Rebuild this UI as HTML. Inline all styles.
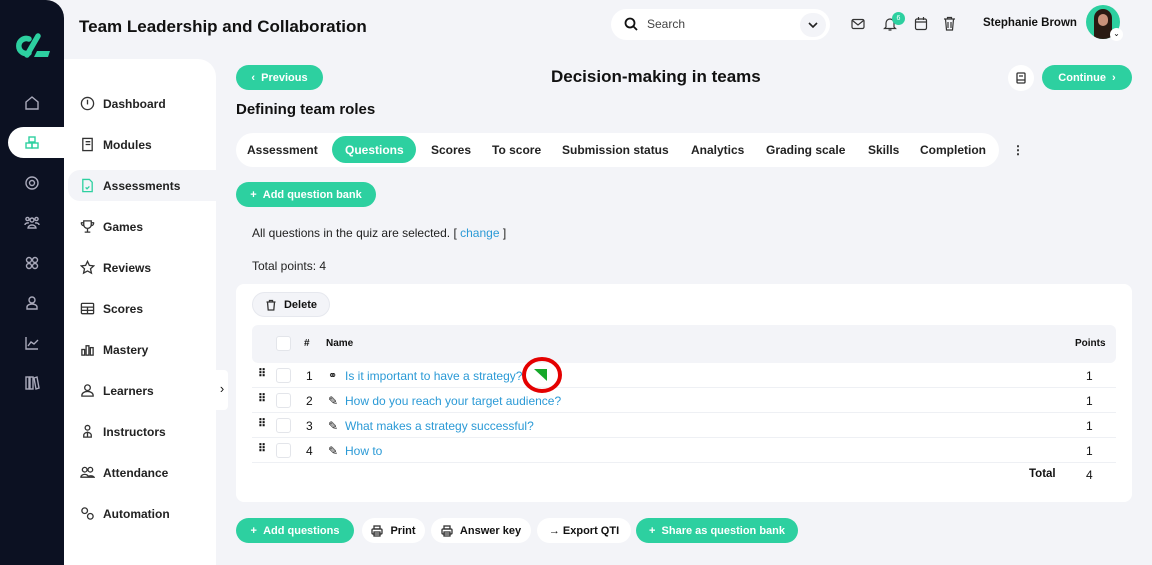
<!DOCTYPE html>
<html><head><meta charset="utf-8"><style>
*{box-sizing:border-box;margin:0;padding:0}
body{width:1152px;height:565px;overflow:hidden;background:#f3f4f8;font-family:"Liberation Sans",sans-serif;color:#111;position:relative}
.a{position:absolute}
.rail{left:0;top:0;width:64px;height:565px;background:#0c1122;border-top-right-radius:18px}
.nav{left:64px;top:59px;width:152px;height:506px;background:#fff;border-top-right-radius:18px}
.ni{position:absolute;left:16px;font-size:12px;font-weight:bold;color:#222;display:flex;align-items:center;gap:8px}
.ni svg{width:15px;height:15px;fill:none;stroke:#333;stroke-width:1.4}
.ri{position:absolute;left:24px;width:16px;height:16px;fill:none;stroke:#aab;stroke-width:1.4}
.btn{position:absolute;height:25px;border-radius:13px;background:#2dd0a0;color:#fff;font-size:11px;font-weight:bold;display:flex;align-items:center;justify-content:center;gap:7px}
.wbtn{position:absolute;height:25px;border-radius:13px;background:#fff;color:#111;font-size:11px;font-weight:bold;display:flex;align-items:center;justify-content:center;gap:7px}
.wbtn svg{width:12px;height:12px;fill:none;stroke:#333;stroke-width:1.3}
.tab{position:absolute;top:143px;font-size:12px;font-weight:bold;color:#222}
.row{position:absolute;left:252px;width:864px;height:25px;border-bottom:1px solid #eef0f4;font-size:12px}
.row span{position:absolute;top:6px}
.cb{position:absolute;left:24px;top:5px;width:15px;height:15px;border:1px solid #e3e5ea;border-radius:3px;background:#fff}
.lnk{color:#2b9ad6}
</style></head><body>
<div class="a rail"></div>
<svg class="a" style="left:12px;top:32px" width="40" height="28" viewBox="0 0 40 28"><path d="M17 7a7.5 7.5 0 1 0 0 14" stroke="#2dd0a0" stroke-width="5.5" fill="none" stroke-linecap="round"/><path d="M26 4L15 23" stroke="#2dd0a0" stroke-width="5.5" stroke-linecap="round"/><path d="M25 19h13l-2 6H22z" fill="#2dd0a0"/></svg>
<svg class="ri" style="top:95px" viewBox="0 0 16 16"><path d="M2 7L8 2l6 5v7H2z"/></svg>
<div class="a" style="left:8px;top:127px;width:56px;height:31px;background:#fff;border-radius:16px 0 0 16px"></div>
<svg class="ri" style="top:135px;stroke:#2dd0a0" viewBox="0 0 16 16"><rect x="5" y="2" width="6" height="5"/><rect x="2" y="8" width="6" height="5"/><rect x="8" y="8" width="6" height="5"/></svg>
<svg class="ri" style="top:175px" viewBox="0 0 16 16"><circle cx="8" cy="8" r="6"/><circle cx="8" cy="8" r="2.5"/></svg>
<svg class="ri" style="top:215px" viewBox="0 0 16 16"><circle cx="8" cy="5" r="2"/><circle cx="3.5" cy="4" r="1.6"/><circle cx="12.5" cy="4" r="1.6"/><path d="M4 13a4 3 0 0 1 8 0zM1 10a3 2 0 0 1 4-2M15 10a3 2 0 0 0-4-2"/></svg>
<svg class="ri" style="top:255px" viewBox="0 0 16 16"><circle cx="5" cy="5" r="2.5"/><circle cx="11" cy="5" r="2.5"/><circle cx="5" cy="11" r="2.5"/><circle cx="11" cy="11" r="2.5"/></svg>
<svg class="ri" style="top:295px" viewBox="0 0 16 16"><circle cx="8" cy="5" r="3"/><path d="M3 14v-2a5 3 0 0 1 10 0v2z"/></svg>
<svg class="ri" style="top:335px" viewBox="0 0 16 16"><path d="M2 2v12h12M4 11l3-4 3 2 4-4"/></svg>
<svg class="ri" style="top:375px" viewBox="0 0 16 16"><rect x="2" y="2" width="3" height="12"/><rect x="6" y="2" width="3" height="12"/><path d="M10 3l3-1 2 11-3 1z"/></svg>

<div class="a nav">
<div class="a" style="left:4px;top:111px;width:148px;height:31px;background:#f3f4f8;border-radius:12px 0 0 12px"></div>
<div class="ni" style="top:37px"><svg viewBox="0 0 16 16"><circle cx="8" cy="8" r="6.5"/><path d="M8 4v5"/></svg>Dashboard</div>
<div class="ni" style="top:78px"><svg viewBox="0 0 16 16"><rect x="3" y="1.5" width="10" height="13"/><path d="M6 5h5M6 8h5"/></svg>Modules</div>
<div class="ni" style="top:119px"><svg viewBox="0 0 16 16" style="stroke:#2dd0a0"><path d="M3 1.5h7l3 3v10H3z"/><path d="M6 10l1.5 1.5L10 9"/></svg>Assessments</div>
<div class="ni" style="top:160px"><svg viewBox="0 0 16 16"><path d="M4 2h8v4a4 4 0 0 1-8 0zM8 10v4M5 14h6M4 4H1.5a2.5 2.5 0 0 0 3 3M12 4h2.5a2.5 2.5 0 0 1-3 3"/></svg>Games</div>
<div class="ni" style="top:201px"><svg viewBox="0 0 16 16"><path d="M8 1.5l2 4.3 4.6.5-3.4 3.1 1 4.6L8 11.7 3.8 14l1-4.6L1.4 6.3 6 5.8z"/></svg>Reviews</div>
<div class="ni" style="top:242px"><svg viewBox="0 0 16 16"><rect x="1.5" y="2.5" width="13" height="11" rx="1"/><path d="M1.5 6.5h13M1.5 10h13M8 6.5v7"/></svg>Scores</div>
<div class="ni" style="top:283px"><svg viewBox="0 0 16 16"><rect x="2" y="8" width="3" height="6"/><rect x="6.5" y="4" width="3" height="10"/><rect x="11" y="6" width="3" height="8"/></svg>Mastery</div>
<div class="ni" style="top:324px"><svg viewBox="0 0 16 16"><circle cx="8" cy="5" r="3"/><path d="M2 14v-1a6 4 0 0 1 12 0v1z"/></svg>Learners</div>
<div class="ni" style="top:365px"><svg viewBox="0 0 16 16"><circle cx="8" cy="4" r="2.5"/><path d="M4 14v-2a4 3 0 0 1 8 0v2zM8 8v6"/></svg>Instructors</div>
<div class="ni" style="top:406px"><svg viewBox="0 0 16 16"><circle cx="5" cy="5" r="2.5"/><circle cx="11" cy="5" r="2.5"/><path d="M1 13a4 3 0 0 1 8 0zM8 13a4 3 0 0 1 7 0z"/></svg>Attendance</div>
<div class="ni" style="top:447px"><svg viewBox="0 0 16 16"><circle cx="5" cy="5" r="3"/><circle cx="11" cy="11" r="3"/></svg>Automation</div>
</div>
<div class="a" style="left:216px;top:370px;width:12px;height:40px;background:#fff;border-radius:0 4px 4px 0;font-size:13px;line-height:38px;text-align:center">›</div>

<div class="a" style="left:79px;top:17px;font-size:17px;font-weight:bold">Team Leadership and Collaboration</div>
<div class="a" style="left:611px;top:9px;width:219px;height:31px;background:#fff;border-radius:16px"></div>
<svg class="a" style="left:624px;top:17px" width="14" height="14" viewBox="0 0 14 14"><circle cx="6" cy="6" r="4.5" stroke="#111" stroke-width="1.8" fill="none"/><path d="M9.5 9.5L13 13" stroke="#111" stroke-width="1.8"/></svg>
<div class="a" style="left:647px;top:17px;font-size:12px;color:#444">Search</div>
<div class="a" style="left:800px;top:13px;width:26px;height:24px;border-radius:12px;background:#f3f4f8"></div>
<svg class="a" style="left:807px;top:20px" width="12" height="10" viewBox="0 0 12 10"><path d="M2 3l4 4 4-4" stroke="#222" stroke-width="1.6" fill="none"/></svg>
<svg class="a" style="left:851px;top:18px" width="14" height="12" viewBox="0 0 14 12"><rect x="1" y="1.5" width="12" height="9" rx="1.5" stroke="#333" fill="none" stroke-width="1.2"/><path d="M1.5 2.5L7 7l5.5-4.5" stroke="#333" fill="none" stroke-width="1.2"/></svg>
<svg class="a" style="left:883px;top:16px" width="14" height="16" viewBox="0 0 14 16"><path d="M3 11V7a4 4 0 0 1 8 0v4l1.5 1.5h-11zM5.5 14h3" stroke="#333" fill="none" stroke-width="1.2"/></svg>
<div class="a" style="left:892px;top:12px;width:13px;height:13px;border-radius:50%;background:#2dd0a0;color:#fff;font-size:7px;text-align:center;line-height:13px">6</div>
<svg class="a" style="left:914px;top:16px" width="14" height="15" viewBox="0 0 14 15"><rect x="1.5" y="3" width="11" height="10.5" rx="1.5" stroke="#333" fill="none" stroke-width="1.2"/><path d="M1.5 6h11M4.5 1v3M9.5 1v3" stroke="#333" stroke-width="1.2"/></svg>
<svg class="a" style="left:943px;top:16px" width="13" height="15" viewBox="0 0 13 15"><path d="M1 3h11M4.5 3V1.5h4V3M2.5 3l1 11h6l1-11M5 6v6M8 6v6" stroke="#333" fill="none" stroke-width="1.2"/></svg>
<div class="a" style="left:983px;top:17px;font-size:11.5px;font-weight:bold">Stephanie Brown</div>
<div class="a" style="left:1086px;top:5px;width:34px;height:34px;border-radius:50%;background:#2dd0a0;overflow:hidden"><div style="position:absolute;left:8px;top:4px;width:18px;height:30px;background:#2a1a12;border-radius:9px 9px 2px 2px"></div><div style="position:absolute;left:12px;top:9px;width:10px;height:12px;background:#c9927a;border-radius:5px"></div></div>
<div class="a" style="left:1110px;top:28px;width:13px;height:13px;border-radius:50%;background:#fff;font-size:8px;text-align:center;line-height:12px">⌄</div>

<div class="btn" style="left:236px;top:65px;width:87px">‹&nbsp;&nbsp;Previous</div>
<div class="a" style="left:551px;top:67px;font-size:17px;font-weight:bold">Decision-making in teams</div>
<div class="a" style="left:1008px;top:65px;width:26px;height:26px;border-radius:50%;background:#fff"></div>
<svg class="a" style="left:1016px;top:72px" width="10" height="12" viewBox="0 0 10 12"><rect x="1" y="1" width="8" height="10" rx="1" stroke="#333" fill="none" stroke-width="1.3"/><path d="M3 4h4M1 8h8" stroke="#333" stroke-width="1.2"/></svg>
<div class="btn" style="left:1042px;top:65px;width:90px">Continue&nbsp;&nbsp;›</div>
<div class="a" style="left:236px;top:101px;font-size:15px;font-weight:bold">Defining team roles</div>

<div class="a" style="left:236px;top:133px;width:763px;height:34px;background:#fff;border-radius:17px"></div>
<div class="a" style="left:332px;top:136px;width:84px;height:27px;background:#2dd0a0;border-radius:14px"></div>
<div class="tab" style="left:247px">Assessment</div>
<div class="tab" style="left:345px;color:#fff">Questions</div>
<div class="tab" style="left:431px">Scores</div>
<div class="tab" style="left:492px">To score</div>
<div class="tab" style="left:562px">Submission status</div>
<div class="tab" style="left:691px">Analytics</div>
<div class="tab" style="left:766px">Grading scale</div>
<div class="tab" style="left:868px">Skills</div>
<div class="tab" style="left:920px">Completion</div>
<div class="tab" style="left:1012px">⋮</div>

<div class="btn" style="left:236px;top:182px;width:140px">+&nbsp;&nbsp;Add question bank</div>
<div class="a" style="left:252px;top:226px;font-size:12px;color:#222">All questions in the quiz are selected. [ <span class="lnk">change</span> ]</div>
<div class="a" style="left:252px;top:259px;font-size:12px;color:#222">Total points: 4</div>

<div class="a" style="left:236px;top:284px;width:896px;height:218px;background:#fff;border-radius:8px"></div>
<div class="wbtn" style="left:252px;top:292px;width:78px;background:#f3f4f8;border:1px solid #e6e8ee"><svg viewBox="0 0 12 12"><path d="M2.5 3h7l-.7 8H3.2zM1.5 3h9M4.5 3V1.5h3V3"/></svg>Delete</div>
<div class="a" style="left:252px;top:325px;width:864px;height:38px;background:#f3f4f8;border-radius:6px"></div>
<div class="a" style="left:276px;top:336px;width:15px;height:15px;border:1px solid #e3e5ea;border-radius:3px;background:#fff"></div>
<div class="a" style="left:304px;top:338px;font-size:10px;font-weight:bold">#</div>
<div class="a" style="left:326px;top:338px;font-size:10px;font-weight:bold">Name</div>
<div class="a" style="left:1075px;top:338px;font-size:10px;font-weight:bold">Points</div>

<div class="row" style="top:363px"><span style="left:6px;font-size:11px;font-weight:bold;top:4px">⠿</span><div class="cb"></div><span style="left:54px">1</span><span style="left:76px;font-size:11px">⚭</span><span class="lnk" style="left:93px">Is it important to have a strategy?</span><span style="left:834px">1</span></div>
<div class="row" style="top:388px"><span style="left:6px;font-size:11px;font-weight:bold;top:4px">⠿</span><div class="cb"></div><span style="left:54px">2</span><span style="left:76px">✎</span><span class="lnk" style="left:93px">How do you reach your target audience?</span><span style="left:834px">1</span></div>
<div class="row" style="top:413px"><span style="left:6px;font-size:11px;font-weight:bold;top:4px">⠿</span><div class="cb"></div><span style="left:54px">3</span><span style="left:76px">✎</span><span class="lnk" style="left:93px">What makes a strategy successful?</span><span style="left:834px">1</span></div>
<div class="row" style="top:438px"><span style="left:6px;font-size:11px;font-weight:bold;top:4px">⠿</span><div class="cb"></div><span style="left:54px">4</span><span style="left:76px">✎</span><span class="lnk" style="left:93px">How to</span><span style="left:834px">1</span></div>
<div class="a" style="left:1029px;top:468px;font-size:11.5px;font-weight:bold">Total</div>
<div class="a" style="left:1086px;top:468px;font-size:12px">4</div>

<svg class="a" style="left:522px;top:356px" width="42" height="38" viewBox="0 0 42 38"><ellipse cx="20" cy="19" rx="18" ry="16" stroke="#e40000" stroke-width="4" fill="none"/><path d="M12 13l13 0 0 12z" fill="#16a82a"/></svg>

<div class="btn" style="left:236px;top:518px;width:118px">+&nbsp;&nbsp;Add questions</div>
<div class="wbtn" style="left:362px;top:518px;width:63px"><svg viewBox="0 0 12 12"><rect x="3" y="1" width="6" height="3"/><rect x="1" y="4" width="10" height="5" rx="1"/><rect x="3" y="7" width="6" height="4"/></svg>Print</div>
<div class="wbtn" style="left:431px;top:518px;width:100px"><svg viewBox="0 0 12 12"><rect x="3" y="1" width="6" height="3"/><rect x="1" y="4" width="10" height="5" rx="1"/><rect x="3" y="7" width="6" height="4"/></svg>Answer key</div>
<div class="wbtn" style="left:537px;top:518px;width:94px">→&nbsp;Export QTI</div>
<div class="btn" style="left:636px;top:518px;width:162px">+&nbsp;&nbsp;Share as question bank</div>
</body></html>
